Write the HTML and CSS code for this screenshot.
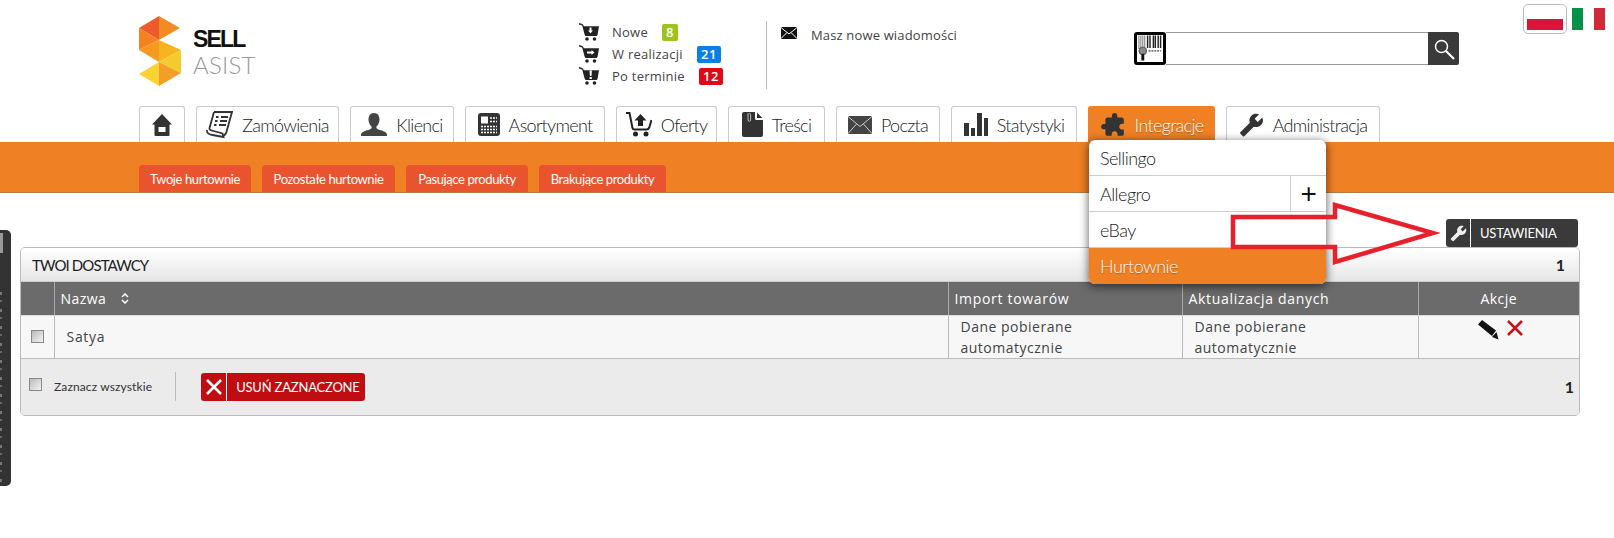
FILE: index.html
```html
<!DOCTYPE html>
<html lang="pl">
<head>
<meta charset="utf-8">
<title>Sell Asist</title>
<link rel="stylesheet" href="styles.css">
</head>
<body>
<svg class="defs" width="0" height="0">
  <symbol id="cart" viewBox="0 0 20 18">
    <path d="M0 0 3.4.9 5 3.2H20L18.6 11.5 17.8 13H6.5L5.6 11.5 3.2 2.6 0 1.4Z"/>
    <circle cx="8" cy="16" r="1.8"/><circle cx="15.5" cy="16" r="1.8"/>
  </symbol>
  <symbol id="wrench" viewBox="0 0 24 24">
    <path transform="matrix(-1 0 0 1 24 0)" d="M22.7 19l-9.1-9.1c.9-2.3.4-5-1.5-6.9-2-2-5-2.4-7.4-1.3L9 6 6 9 1.6 4.7C.4 7.1.9 10.1 2.9 12.1c1.9 1.9 4.6 2.4 6.9 1.5l9.1 9.1c.4.4 1 .4 1.4 0l2.3-2.3c.5-.4.5-1.1.1-1.4z"/>
  </symbol>
</svg>

<div class="side-tab"><span class="side-cap"></span><span class="side-dash"></span></div>

<header class="top">
  <a class="logo">
    <svg class="logo-mark" viewBox="139 16 42 70" width="42" height="70">
      <path fill="#ee5a2c" d="M159 16 139 28 159 40Z"/>
      <path fill="#f28b24" d="M159 16 180 28 159 40Z"/>
      <path fill="#f58222" d="M139 28 139 50 159 40Z"/>
      <path fill="#f59a1f" d="M139 50 159 40 159 62Z"/>
      <path fill="#f6b51f" d="M159 40 181 50 159 62Z"/>
      <path fill="#f4cb2d" d="M181 50 181 73 159 62Z"/>
      <path fill="#fad233" d="M139 74 159 62 159 86Z"/>
      <path fill="#f39f26" d="M159 62 181 73 159 86Z"/>
    </svg>
    <span class="logo-text"><b>SELL</b><span>ASIST</span></span>
  </a>

  <ul class="orders">
    <li><svg class="cart" width="20" height="18"><use href="#cart"/><path class="glyph" d="M10.5 4.5h2v3h1.5l-2.500 3-2.500-3h1.500z"/></svg>Nowe<span class="badge green">8</span></li>
    <li><svg class="cart" width="20" height="18"><use href="#cart"/><path class="glyph" d="M8 6.500h4.500V5l3 2.500-3 2.500V8.500H8z"/></svg>W realizacji<span class="badge blue">21</span></li>
    <li><svg class="cart" width="20" height="18"><use href="#cart"/><path class="glyph" d="M10.500 3.500h2.400l-.4 5.500h-1.600zM10.600 10h2.200v2h-2.200z"/></svg>Po terminie<span class="badge red">12</span></li>
  </ul>

  <div class="messages">
    <svg class="mail" width="16" height="12" viewBox="0 0 16 12"><rect width="16" height="12" rx="1.500"/><path d="M.5 1 8 7l7.500-6M.5 11l5.500-5.500M15.500 11 10 5.500" fill="none" stroke="#fff" stroke-width="1"/></svg>
    <span>Masz nowe wiadomości</span>
  </div>

  <form class="search">
    <span class="barcode">
      <svg width="26" height="27" viewBox="0 0 26 27">
        <path d="M1 0v14M3 0v14M5 0v12M7 0v12" stroke="#888" stroke-width="1.200"/>
        <path d="M10 0v13M12.500 0v13M16 0v13M18 0v13M21 0v13M23.500 0v13" stroke="#222" stroke-width="1.500"/>
        <circle cx="5" cy="16" r="4" fill="#888" stroke="#555"/>
        <path d="M5 19v7" stroke="#111" stroke-width="3"/>
        <path d="M11 16h13" stroke="#777" stroke-width="2" stroke-dasharray="2 1"/>
      </svg>
    </span>
    <input class="search-input" type="text" aria-label="Szukaj">
    <button class="search-btn" type="button" aria-label="Szukaj">
      <svg width="24" height="24" viewBox="0 0 24 24" fill="none" stroke="#fff"><circle cx="9.500" cy="9.500" r="6" stroke-width="1.500"/><path d="M14 14l8 8" stroke-width="2.200"/></svg>
    </button>
  </form>

  <div class="flags">
    <span class="flag-box"><span class="flag pl"></span></span>
    <span class="flag it"></span>
  </div>
</header>

<nav class="tabs">
  <a class="tab">
    <svg width="20" height="22" viewBox="0 0 20 22"><path fill="#333" d="M10 0 20 10.500 17.500 10.500V21a1 1 0 0 1-1 1H3.500a1 1 0 0 1-1-1V10.500H0Z"/><rect x="6.500" y="13" width="7" height="5" fill="#fff"/></svg>
  </a>
  <a class="tab">
    <svg width="27" height="29" viewBox="0 0 27 29"><path fill="none" stroke="#333" stroke-width="1.800" d="M8 2h18l-5 18c-.6 3-1.500 5-4 6"/><path fill="none" stroke="#333" stroke-width="1.800" d="M8 2 3.500 18c-.5 2 2 2.500 4 3l9 2.500 1 3.500-11-2c-3-.5-6-2-5.500-5"/><path stroke="#333" stroke-width="2" d="M10 7h2.500M15 7h7M9 11h2.500M14 11h7M8 15h2.500M13 15h7"/></svg>
    Zamówienia
  </a>
  <a class="tab">
    <svg width="26" height="23" viewBox="0 0 26 23"><path fill="#444" d="M13 0c3.500 0 5.500 2.800 5.500 6.500 0 3-1.300 5.500-3 7-.4 1.500.4 2.500 1.800 3 3.500 1.200 8.700 2 8.700 5.500v1H0v-1c0-3.500 5.200-4.300 8.700-5.500 1.400-.5 2.200-1.500 1.800-3-1.700-1.500-3-4-3-7C7.500 2.800 9.500 0 13 0Z"/></svg>
    Klienci
  </a>
  <a class="tab">
    <svg width="22" height="23" viewBox="0 0 22 23"><rect width="22" height="23" rx="3" fill="#333"/><rect x="3" y="3.500" width="7" height="7" fill="#fff"/><path stroke="#fff" stroke-width="1.500" stroke-dasharray="2 1" d="M12 5h7M12 8.500h7M3 13.500h16M3 16.500h16M3 19.500h16"/></svg>
    Asortyment
  </a>
  <a class="tab">
    <svg width="26" height="25" viewBox="0 0 26 25"><path fill="none" stroke="#222" stroke-width="2" d="M0 1h3.500l3 15c.2 1 .8 1.500 2 1.500h12c1.500 0 2.300-.8 2.800-2L25.500 8"/><path fill="#222" d="M14.500 2l6 6.500h-3.500V14h-5V8.500H8.500Z"/><circle cx="9.500" cy="22" r="2.500" fill="#222"/><circle cx="20" cy="22" r="2.500" fill="#222"/></svg>
    Oferty
  </a>
  <a class="tab">
    <svg width="21" height="25" viewBox="0 0 21 25"><path fill="#333" d="M2 0h11v6.500a1.500 1.500 0 0 0 1.500 1.500H21v15a2 2 0 0 1-2 2H2a2 2 0 0 1-2-2V2a2 2 0 0 1 2-2Zm13 .5L20.500 6H15Z"/><path fill="none" stroke="#bbb" d="M6 1.500V8a1.300 1.300 0 0 0 2.600 0V2.500a1 1 0 0 0-2 0"/></svg>
    Treści
  </a>
  <a class="tab">
    <svg width="24" height="18" viewBox="0 0 24 18"><rect width="24" height="18" rx="1.500" fill="#444"/><path d="M.5 1 12 10.500 23.500 1M.5 17 8.500 8M23.500 17l-8-9" fill="none" stroke="#ccc" stroke-width="1"/></svg>
    Poczta
  </a>
  <a class="tab">
    <svg width="24" height="23" viewBox="0 0 24 23" fill="#333"><rect y="10" width="5" height="13"/><rect x="7" y="15" width="4" height="8"/><rect x="13" y="0" width="5" height="23"/><rect x="20" y="5" width="4" height="18"/></svg>
    Statystyki
  </a>
  <a class="tab active">
    <svg width="26" height="26" viewBox="0 0 24 24"><path fill="#333" transform="matrix(-1 0 0 1 24 0)" d="M20.500 11H19V7c0-1.100-.9-2-2-2h-4V3.500C13 2.120 11.880 1 10.500 1S8 2.120 8 3.500V5H4c-1.100 0-1.990.9-1.990 2v3.800H3.500c1.490 0 2.700 1.210 2.700 2.700s-1.210 2.700-2.700 2.700H2V20c0 1.100.9 2 2 2h3.800v-1.500c0-1.490 1.210-2.700 2.700-2.700 1.490 0 2.700 1.210 2.700 2.700V22H17c1.100 0 2-.9 2-2v-4h1.500c1.380 0 2.500-1.120 2.500-2.500S21.880 11 20.500 11z"/></svg>
    Integracje
    <ul class="dropdown">
      <li>Sellingo</li>
      <li class="has-plus">Allegro<span class="plus">+</span></li>
      <li>eBay</li>
      <li class="current">Hurtownie</li>
    </ul>
  </a>
  <a class="tab">
    <svg width="25" height="26" fill="#333"><use href="#wrench"/></svg>
    Administracja
  </a>
</nav>

<div class="band">
  <a class="subtab">Twoje hurtownie</a>
  <a class="subtab">Pozostałe hurtownie</a>
  <a class="subtab">Pasujące produkty</a>
  <a class="subtab">Brakujące produkty</a>
</div>

<main class="main">
  <div class="actions">
    <a class="icon-btn dark">
      <span class="icon-part"><svg width="17" height="17" fill="#eee"><use href="#wrench"/></svg></span>
      <span class="label-part">USTAWIENIA</span>
    </a>
  </div>

  <section class="panel">
    <div class="panel-title"><span>TWOI DOSTAWCY</span><span class="count">1</span></div>
    <table class="grid">
      <colgroup><col class="c1"><col class="c2"><col class="c3"><col class="c4"><col></colgroup>
      <thead>
        <tr>
          <th></th>
          <th class="th-name">Nazwa <svg class="sort" width="10" height="11" viewBox="0 0 10 11" fill="none" stroke="#fff" stroke-width="1.500"><path d="M2 4 5 1l3 3M2 7l3 3 3-3"/></svg></th>
          <th>Import towarów</th>
          <th>Aktualizacja danych</th>
          <th class="center">Akcje</th>
        </tr>
      </thead>
      <tbody>
        <tr>
          <td class="center"><input class="check" type="checkbox" aria-label="Zaznacz"></td>
          <td class="name">Satya</td>
          <td>Dane pobierane automatycznie</td>
          <td>Dane pobierane automatycznie</td>
          <td class="row-actions">
            <svg class="pencil" width="21" height="20" viewBox="0 0 21 20"><path fill="#111" d="M4 0 18 10.500 14 16 0 4.500Z"/><path fill="#111" d="M18.500 12 20.500 19.500l-6.500-2.500Z"/></svg>
            <svg class="cross" width="18" height="16" viewBox="0 0 18 16"><path d="M2 1l14 14M16 1 2 15" stroke="#c2161d" stroke-width="2.600" fill="none"/></svg>
          </td>
        </tr>
      </tbody>
    </table>
    <div class="panel-foot">
      <input class="check" type="checkbox" aria-label="Zaznacz wszystkie">
      <span class="select-all">Zaznacz wszystkie</span>
      <span class="foot-sep"></span>
      <a class="icon-btn danger">
        <span class="icon-part"><svg width="16" height="16" viewBox="0 0 16 16"><path d="M1 1l14 14M15 1 1 15" stroke="#fff" stroke-width="2.600" fill="none"/></svg></span>
        <span class="label-part">USUŃ ZAZNACZONE</span>
      </a>
      <span class="count foot-count">1</span>
    </div>
  </section>
</main>

<svg class="arrow" width="210" height="66" viewBox="1230 202 210 66"><path d="M1233 217H1335V205L1433 233 1335 262V247H1233Z" fill="none" stroke="#e8202c" stroke-width="4.500"/></svg>
</body>
</html>
```

FILE: styles.css
```css
* { box-sizing: border-box; }
html, body { margin: 0; padding: 0; }
body {
  background: #fff;
  color: #444;
  font-family: "Open Sans", "Liberation Sans", sans-serif;
  font-size: 13px;
  height: 538px;
  overflow: hidden;
}
a { color: inherit; text-decoration: none; }
ul { list-style: none; margin: 0; padding: 0; }
.defs { position: absolute; }

/* header */
.top { display: flex; height: 106px; padding-left: 139px; }
.logo { display: flex; width: 440px; padding-top: 16px; align-items: flex-start; }
.logo-text { display: flex; flex-direction: column; margin: 11px 0 0 12px; font-family: "Liberation Sans", sans-serif; font-size: 24px; line-height: 25px; }
.logo-text b { color: #111; font-size: 23px; letter-spacing: -1.8px; }
.logo-text span { color: #999; font-family: Lato, sans-serif; font-weight: 300; letter-spacing: .2px; }

.orders { width: 187px; padding-top: 21px; }
.orders li { display: flex; align-items: center; height: 22px; letter-spacing: .25px; color: #444; white-space: nowrap; }
.cart { margin-right: 13px; fill: #222; flex: none; }
.glyph { fill: #fff; }
.badge { display: inline-block; margin-left: 14px; height: 17px; line-height: 17px; min-width: 16px; padding: 0 4px; border-radius: 2px; color: #fff; font-weight: 600; text-align: center; letter-spacing: .5px; }
.green { background: #9dc31c; }
.blue { background: #0b7fe8; min-width: 24px; }
.red { background: #e00814; min-width: 24px; }

.messages { display: flex; align-items: flex-start; width: 368px; height: 68px; margin-top: 21px; border-left: 1px solid #bbb; padding: 5px 0 0 14px; letter-spacing: .15px; }
.mail { flex: none; margin: 1px 14px 0 0; fill: #111; }

.search { display: flex; height: 33px; width: 325px; margin-top: 32px; }
.barcode { display: flex; flex: none; width: 32px; background: #fff; border: 3px solid #000; border-radius: 3px; overflow: hidden; padding-left: 1px; }
.search-input { flex: 1; min-width: 0; border: 1px solid #999; border-width: 1px 0; padding: 0 4px; background: #fff; outline: none; }
.search-btn { display: flex; align-items: center; justify-content: center; flex: none; width: 31px; padding: 0; border: 0; border-radius: 0 2px 2px 0; background: #3a3a3a; }

.flags { display: flex; align-items: flex-start; margin: 4px 0 0 64px; gap: 5px; }
.flag-box { display: block; width: 44px; height: 30px; padding: 3px; border: 1px solid #bbb; border-radius: 5px; }
.flag { display: block; }
.pl { width: 36px; height: 22px; background: linear-gradient(#fff 50%, #dc143c 50%); }
.it { width: 33px; height: 22px; margin-top: 4px; background: linear-gradient(90deg, #009246 33.300%, #fff 33.300%, #fff 66.600%, #ce2b37 66.600%); }

/* main tabs */
.tabs { display: grid; grid-template-columns: 46px 143px 104px 140px 101px 97px 104px 126px 127px 154px; column-gap: 11px; height: 36px; padding-left: 139px; font-family: Lato, "Open Sans", sans-serif; font-weight: 300; font-size: 18px; color: #222; }
.tab { position: relative; display: flex; align-items: center; justify-content: center; gap: 9px; height: 36px; border: 1px solid #ccc; border-bottom: 0; border-radius: 3px 3px 0 0; letter-spacing: -.7px; white-space: nowrap; }
.tab.active { background: #ef8024; border-color: #ef8024; color: #fff; text-shadow: 0 1px 1px rgba(0,0,0,.3); }

.dropdown { position: absolute; z-index: 5; top: 33px; left: 0; width: 237px; background: #fff; border-radius: 6px; box-shadow: 0 2px 8px 1px rgba(0,0,0,.55); color: #222; text-shadow: none; font-size: 18px; letter-spacing: -.55px; overflow: hidden; }
.dropdown li { display: flex; align-items: center; justify-content: space-between; height: 36px; padding-left: 11px; border-bottom: 1px solid #ccc; }
.dropdown li.current { height: 36px; border: 0; background: #ef8024; color: #fff; text-shadow: 0 1px 1px rgba(0,0,0,.3); }
.plus { display: flex; align-items: center; justify-content: center; width: 36px; height: 35px; border-left: 1px solid #ccc; color: #111; font-size: 28px; font-weight: 400; font-family: "Liberation Sans", sans-serif; }

/* orange band */
.band { display: flex; align-items: flex-end; gap: 11px; height: 51px; padding-left: 139px; background: #ef8024; border-bottom: 1px solid #b07a4c; font-family: Lato, "Open Sans", sans-serif; font-size: 13px; color: #fff; }
.subtab { display: flex; align-items: center; justify-content: center; height: 27px; background: #e9532e; border-radius: 4px 4px 0 0; letter-spacing: -.4px; }
.subtab:nth-child(1) { width: 112px; }
.subtab:nth-child(2) { width: 133px; }
.subtab:nth-child(3) { width: 122px; }
.subtab:nth-child(4) { width: 127px; }

/* content */
.main { padding: 26px 34px 0 20px; }
.actions { display: flex; justify-content: flex-end; height: 28px; padding-right: 2px; }
.icon-btn { display: flex; height: 28px; border-radius: 3px; color: #fff; font-family: Lato, "Open Sans", sans-serif; font-size: 13px; letter-spacing: -.2px; white-space: nowrap; overflow: hidden; }
.icon-part { display: flex; align-items: center; justify-content: center; flex: none; border-right: 1px solid #fff; }
.label-part { display: flex; align-items: center; padding-left: 9px; }
.dark { width: 132px; background: #3a3a3a; }
.dark .icon-part { width: 25px; }
.danger { width: 164px; background: #c00d12; }
.danger .icon-part { width: 26px; }

.panel { border: 1px solid #bbb; border-radius: 5px; overflow: hidden; width: 1560px; }
.panel-title { display: flex; justify-content: space-between; align-items: center; height: 34px; padding: 0 14px 0 11px; border-bottom: 1px solid #ccc; background: linear-gradient(#fff, #e6e6e6); font-family: Lato, "Open Sans", sans-serif; font-weight: 400; font-size: 15px; letter-spacing: -.9px; color: #222; }
.count { font-family: Lato, sans-serif; font-size: 16px; font-weight: 700; letter-spacing: 0; color: #222; }

.grid { width: 100%; border-collapse: collapse; table-layout: fixed; }
.c1 { width: 33px; }
.c2 { width: 894px; }
.c3 { width: 234px; }
.c4 { width: 236px; }
.grid th { height: 33px; padding: 0 0 0 6px; background: #6b6b6b; color: #fff; font-weight: 400; font-size: 14px; letter-spacing: .68px; text-align: left; border-left: 1px solid #aaa; border-bottom: 1px solid #ddd; }
.grid th.th-name { letter-spacing: .45px; }
.grid th:first-child, .grid td:first-child { border-left: 0; }
.grid th.center { text-align: center; padding: 0; letter-spacing: .45px; }
.grid td { height: 43px; padding: 0 40px 0 12px; background: #f7f7f7; border-left: 1px solid #bbb; border-bottom: 1px solid #bbb; font-size: 14px; line-height: 21px; letter-spacing: .5px; color: #444; vertical-align: middle; }
.grid td.center { padding: 0; text-align: center; }
.grid td.name { padding-left: 12px; letter-spacing: .7px; }
.grid td.row-actions { padding: 4px 0 0 5px; text-align: center; vertical-align: top; }
.row-actions svg { vertical-align: top; }
.pencil { margin-right: 3px; }
.sort { margin-left: 10px; }

.check { appearance: none; -webkit-appearance: none; display: block; width: 13px; height: 13px; margin: 0 auto; border: 1px solid #888; background: linear-gradient(135deg, #bbb, #f2f2f2); }

.panel-foot { display: flex; align-items: center; height: 56px; padding: 0 5px 0 8px; background: #ebebeb; }
.panel-foot .check { margin: -4px 12px 0 0; }
.select-all { font-family: Lato, "Open Sans", sans-serif; font-size: 12px; letter-spacing: .12px; color: #333; }
.foot-sep { width: 1px; height: 29px; margin: 0 25px 0 23px; background: #bbb; }
.foot-count { margin-left: auto; }

/* page-level overlays */
.side-tab { position: absolute; left: 0; top: 230px; width: 11px; height: 256px; background: #333; border-radius: 0 5px 5px 0; }
.side-cap { position: absolute; left: 0; top: 3px; width: 3px; height: 20px; background: #999; }
.side-dash { position: absolute; left: 0; top: 62px; width: 2px; height: 190px; background: repeating-linear-gradient(#777 0 3px, #333 3px 8px, #666 8px 10px, #333 10px 17px); }
.arrow { position: absolute; z-index: 6; left: 1230px; top: 202px; pointer-events: none; }
```
